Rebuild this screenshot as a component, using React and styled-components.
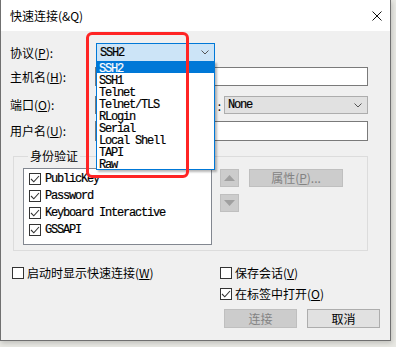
import React from 'react';
import styled, { createGlobalStyle } from 'styled-components';

const GlobalStyle = createGlobalStyle`
  html, body {
    margin: 0;
    padding: 0;
  }
  body {
    width: 396px;
    height: 347px;
    overflow: hidden;
    background: #e8e8e3;
    font-family: "Noto Sans CJK SC", "Noto Sans", sans-serif;
    font-size: 12px;
    color: #000;
  }
`;

const mono = `"Liberation Mono", "Courier New", Courier, monospace`;

const Window = styled.div`
  position: relative;
  box-sizing: border-box;
  width: 391px;
  height: 341px;
  border: 1px solid #707070;
  border-top: none;
  background: #f0f0f0;
  box-shadow: 1px 2px 5px rgba(0, 0, 0, 0.18);
  display: flex;
  flex-direction: column;
`;

const TitleBar = styled.div`
  height: 31px;
  flex: none;
  background: #fff;
  display: flex;
  align-items: center;
  justify-content: space-between;
  padding: 0 8px 0 9px;
  font-size: 12px;
`;

const Body = styled.div`
  padding: 12px 0 0 9px;
`;

const FieldRow = styled.div`
  display: flex;
  align-items: center;
  width: 358px;
  margin-top: ${p => p.$top || 0}px;
  height: ${p => p.$h || 19}px;
`;

const Label = styled.div`
  width: 85px;
  flex: none;
  line-height: 14px;
  white-space: nowrap;
`;

const TextInput = styled.div`
  box-sizing: border-box;
  width: ${p => p.$w || 273}px;
  flex: none;
  height: 100%;
  background: #fff;
  border: 1px solid #7a7a7a;
`;

const InlineLabel = styled.div`
  flex: 1;
  text-align: right;
  padding-right: 3px;
  white-space: nowrap;
`;

const MonoText = styled.span`
  font-family: ${mono};
  font-size: 12px;
  letter-spacing: -1.2px;
  -webkit-text-stroke: 0.2px currentColor;
`;

const Combo = styled.div`
  position: relative;
  box-sizing: border-box;
  flex: none;
  width: ${p => p.$w}px;
  height: 100%;
  margin-left: ${p => p.$ml || 0}px;
  background: ${p => (p.$focus ? '#cce4f7' : '#e1e1e1')};
  border: 1px solid ${p => (p.$focus ? '#0078d7' : '#adadad')};
  display: flex;
  align-items: center;
  justify-content: space-between;
  padding: 0 5px 0 3px;
`;

const DropList = styled.div`
  position: absolute;
  left: -1px;
  top: 100%;
  box-sizing: border-box;
  width: 119px;
  background: #fff;
  border: 1px solid #0078d7;
  border-top: none;
  box-shadow: 2px 2px 2px rgba(0, 0, 0, 0.28);
  z-index: 2;
`;

const DropItem = styled.div`
  height: 12px;
  line-height: 12px;
  padding-left: 2px;
  background: ${p => (p.$selected ? '#0078d7' : 'transparent')};
  color: ${p => (p.$selected ? '#fff' : '#000')};
  white-space: nowrap;
`;

const GroupBox = styled.fieldset`
  box-sizing: border-box;
  width: 355px;
  margin: 8px 0 0 3px;
  padding: 5px 0 5px 9px;
  border: 1px solid #dcdcdc;
  display: flex;
  align-items: flex-start;
`;

const Legend = styled.legend`
  padding: 0 2px;
  margin-left: 5px;
  line-height: 14px;
  font-size: 12px;
`;

const CheckList = styled.div`
  box-sizing: border-box;
  width: 189px;
  height: 77px;
  background: #fff;
  border: 1px solid #828790;
  padding: 4px 0 0 5px;
`;

const CheckItem = styled.div`
  height: 17px;
  display: flex;
  align-items: flex-start;
  gap: 4px;
  line-height: 12px;
`;

const Box = styled.span`
  box-sizing: border-box;
  width: 12px;
  height: 12px;
  flex: none;
  border: 1px solid #333;
  background: #fff;
  display: flex;
  align-items: center;
  justify-content: center;
`;

const SideButtons = styled.div`
  display: flex;
  flex-direction: column;
  gap: 7px;
  margin: 1px 0 0 8px;
`;

const ArrowButton = styled.div`
  box-sizing: border-box;
  width: 19px;
  height: 18px;
  background: #cccccc;
  border: 1px solid #bfbfbf;
  display: flex;
  align-items: center;
  justify-content: center;
`;

const Button = styled.div`
  box-sizing: border-box;
  width: ${p => p.$w || 73}px;
  height: ${p => p.$h || 19}px;
  margin: ${p => p.$m || 0};
  background: ${p => (p.$disabled ? '#cccccc' : '#e1e1e1')};
  border: 1px solid ${p => (p.$disabled ? '#bfbfbf' : '#adadad')};
  color: ${p => (p.$disabled ? '#838383' : '#000')};
  display: flex;
  align-items: center;
  justify-content: center;
  font-size: 12px;
  line-height: 14px;
`;

const Bottom = styled.div`
  display: grid;
  grid-template-columns: 208px 1fr;
  margin-top: 16px;
  padding-left: 2px;
`;

const Column = styled.div`
  display: flex;
  flex-direction: column;
  gap: 9px;
`;

const CheckRow = styled.label`
  display: flex;
  align-items: center;
  gap: 3px;
  height: 12px;
  line-height: 14px;
  white-space: nowrap;
`;

const ButtonRow = styled.div`
  display: flex;
  gap: 10px;
  margin-left: 4px;
`;

const Highlight = styled.div`
  position: absolute;
  left: 85px;
  top: 32px;
  width: 103px;
  height: 146px;
  box-sizing: border-box;
  border: 3px solid #ff2424;
  border-radius: 6px;
  z-index: 3;
  pointer-events: none;
`;

const Check = ({ on }) => (
  <Box>
    {on && (
      <svg width="10" height="10" viewBox="0 0 10 10">
        <path d="M1 5 L3.8 7.8 L9 2" fill="none" stroke="#333" strokeWidth="1.1" />
      </svg>
    )}
  </Box>
);

const Chevron = () => (
  <svg width="8" height="5" viewBox="0 0 8 5">
    <path d="M0.5 0.5 L4 4 L7.5 0.5" fill="none" stroke="#555" strokeWidth="1" />
  </svg>
);

const protocols = ['SSH2', 'SSH1', 'Telnet', 'Telnet/TLS', 'RLogin', 'Serial', 'Local Shell', 'TAPI', 'Raw'];
const auths = ['PublicKey', 'Password', 'Keyboard Interactive', 'GSSAPI'];

export default function App() {
  return (
    <>
      <GlobalStyle />
      <Window>
        <TitleBar>
          <span>快速连接(&amp;Q)</span>
          <svg width="10" height="10" viewBox="0 0 10 10">
            <path d="M0.5 0.5 L9.5 9.5 M9.5 0.5 L0.5 9.5" stroke="#111" strokeWidth="1" />
          </svg>
        </TitleBar>
        <Body>
          <FieldRow>
            <Label>协议(<u>P</u>):</Label>
            <Combo $w={119} $ml={1} $focus>
              <MonoText>SSH2</MonoText>
              <Chevron />
              <DropList>
                {protocols.map((p, i) => (
                  <DropItem key={p} $selected={i === 0}>
                    <MonoText>{p}</MonoText>
                  </DropItem>
                ))}
              </DropList>
            </Combo>
          </FieldRow>
          <FieldRow $top={5}>
            <Label>主机名(<u>H</u>):</Label>
            <TextInput />
          </FieldRow>
          <FieldRow $top={10} $h={18}>
            <Label>端口(<u>O</u>):</Label>
            <TextInput $w={50} />
            <InlineLabel>:</InlineLabel>
            <Combo $w={144}>
              <MonoText>None</MonoText>
              <Chevron />
            </Combo>
          </FieldRow>
          <FieldRow $top={7} $h={20}>
            <Label>用户名(<u>U</u>):</Label>
            <TextInput />
          </FieldRow>
          <GroupBox>
            <Legend>身份验证</Legend>
            <CheckList>
              {auths.map(a => (
                <CheckItem key={a}>
                  <Check on />
                  <MonoText>{a}</MonoText>
                </CheckItem>
              ))}
            </CheckList>
            <SideButtons>
              <ArrowButton>
                <svg width="11" height="6" viewBox="0 0 11 6">
                  <path d="M0 6 L5.5 0 L11 6 Z" fill="#a0a0a0" />
                </svg>
              </ArrowButton>
              <ArrowButton>
                <svg width="11" height="6" viewBox="0 0 11 6">
                  <path d="M0 0 L11 0 L5.5 6 Z" fill="#a0a0a0" />
                </svg>
              </ArrowButton>
            </SideButtons>
            <Button $w={94} $h={18} $m="1px 0 0 10px" $disabled>属性(<u>P</u>)...</Button>
          </GroupBox>
          <Bottom>
            <Column>
              <CheckRow>
                <Check />
                <span>启动时显示快速连接(<u>W</u>)</span>
              </CheckRow>
            </Column>
            <Column>
              <CheckRow>
                <Check />
                <span>保存会话(<u>V</u>)</span>
              </CheckRow>
              <CheckRow>
                <Check on />
                <span>在标签中打开(<u>O</u>)</span>
              </CheckRow>
              <ButtonRow>
                <Button $disabled>连接</Button>
                <Button>取消</Button>
              </ButtonRow>
            </Column>
          </Bottom>
        </Body>
        <Highlight />
      </Window>
    </>
  );
}
